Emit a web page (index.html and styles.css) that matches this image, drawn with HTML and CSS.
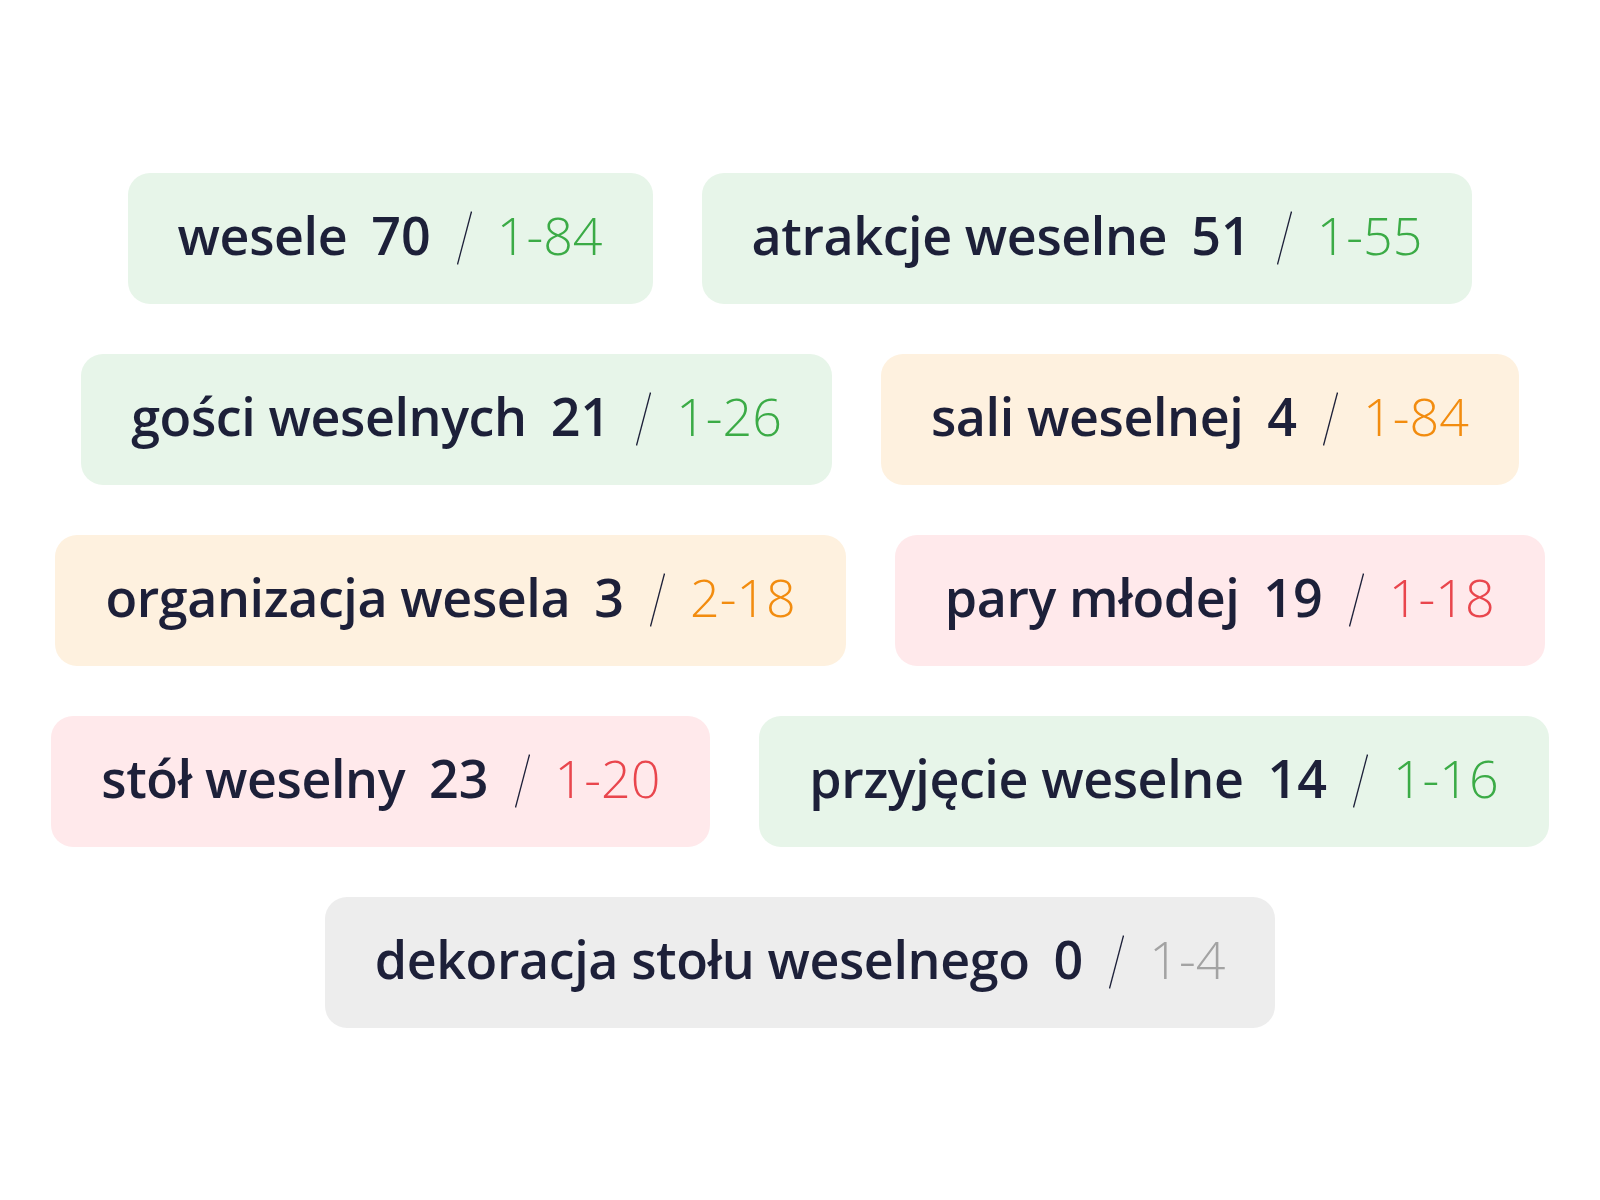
FILE: index.html
```html
<!DOCTYPE html>
<html lang="pl">
<head>
<meta charset="utf-8">
<title>Słowa kluczowe</title>
<link rel="stylesheet" href="styles.css">
</head>
<body>
<main class="board">
  <div class="row">
    <div class="chip green"><span class="label">wesele</span><span class="count">70</span><svg class="slash" viewBox="0 0 15 54" width="15" height="54"><line x1="14.5" y1="0.5" x2="0.5" y2="53.5"/></svg><span class="range">1-84</span></div>
    <div class="chip green"><span class="label">atrakcje weselne</span><span class="count">51</span><svg class="slash" viewBox="0 0 15 54" width="15" height="54"><line x1="14.5" y1="0.5" x2="0.5" y2="53.5"/></svg><span class="range">1-55</span></div>
  </div>
  <div class="row">
    <div class="chip green"><span class="label">gości weselnych</span><span class="count">21</span><svg class="slash" viewBox="0 0 15 54" width="15" height="54"><line x1="14.5" y1="0.5" x2="0.5" y2="53.5"/></svg><span class="range">1-26</span></div>
    <div class="chip orange"><span class="label">sali weselnej</span><span class="count">4</span><svg class="slash" viewBox="0 0 15 54" width="15" height="54"><line x1="14.5" y1="0.5" x2="0.5" y2="53.5"/></svg><span class="range">1-84</span></div>
  </div>
  <div class="row">
    <div class="chip orange"><span class="label">organizacja wesela</span><span class="count">3</span><svg class="slash" viewBox="0 0 15 54" width="15" height="54"><line x1="14.5" y1="0.5" x2="0.5" y2="53.5"/></svg><span class="range">2-18</span></div>
    <div class="chip red"><span class="label">pary młodej</span><span class="count">19</span><svg class="slash" viewBox="0 0 15 54" width="15" height="54"><line x1="14.5" y1="0.5" x2="0.5" y2="53.5"/></svg><span class="range">1-18</span></div>
  </div>
  <div class="row">
    <div class="chip red"><span class="label">stół weselny</span><span class="count">23</span><svg class="slash" viewBox="0 0 15 54" width="15" height="54"><line x1="14.5" y1="0.5" x2="0.5" y2="53.5"/></svg><span class="range">1-20</span></div>
    <div class="chip green"><span class="label">przyjęcie weselne</span><span class="count">14</span><svg class="slash" viewBox="0 0 15 54" width="15" height="54"><line x1="14.5" y1="0.5" x2="0.5" y2="53.5"/></svg><span class="range">1-16</span></div>
  </div>
  <div class="row">
    <div class="chip gray"><span class="label">dekoracja stołu weselnego</span><span class="count">0</span><svg class="slash" viewBox="0 0 15 54" width="15" height="54"><line x1="14.5" y1="0.5" x2="0.5" y2="53.5"/></svg><span class="range">1-4</span></div>
  </div>
</main>
</body>
</html>
```

FILE: styles.css
```css
html, body {
  margin: 0;
  padding: 0;
  background: #ffffff;
}

body {
  font-family: "Open Sans", "Noto Sans", "DejaVu Sans", sans-serif;
  color: #1d2039;
}

.board {
  height: 1200px;
  display: flex;
  flex-direction: column;
  justify-content: center;
  align-items: center;
  gap: 50px;
}

.row {
  display: flex;
  justify-content: center;
  gap: 49px;
}

.chip {
  height: 131px;
  box-sizing: border-box;
  padding: 0 50px 6px;
  border-radius: 22px;
  display: flex;
  align-items: center;
  font-size: 52px;
  line-height: 1;
  white-space: nowrap;
}

.label {
  font-weight: 600;
  letter-spacing: -0.4px;
}

.count {
  font-weight: 600;
  margin-left: 24px;
}

.slash {
  margin-left: 26px;
  margin-top: 6px;
  flex: none;
}

.slash line {
  stroke: #1d2039;
  stroke-width: 1.3;
}

.range {
  font-weight: 300;
  margin-left: 25px;
}

.green { background: #e7f5e9; }
.green .range { color: #3bab46; }

.orange { background: #fef1df; }
.orange .range { color: #f28c0f; }

.red { background: #ffe9eb; }
.red .range { color: #e9464d; }

.gray { background: #ededed; }
.gray .range { color: #a3a3a3; }
```
